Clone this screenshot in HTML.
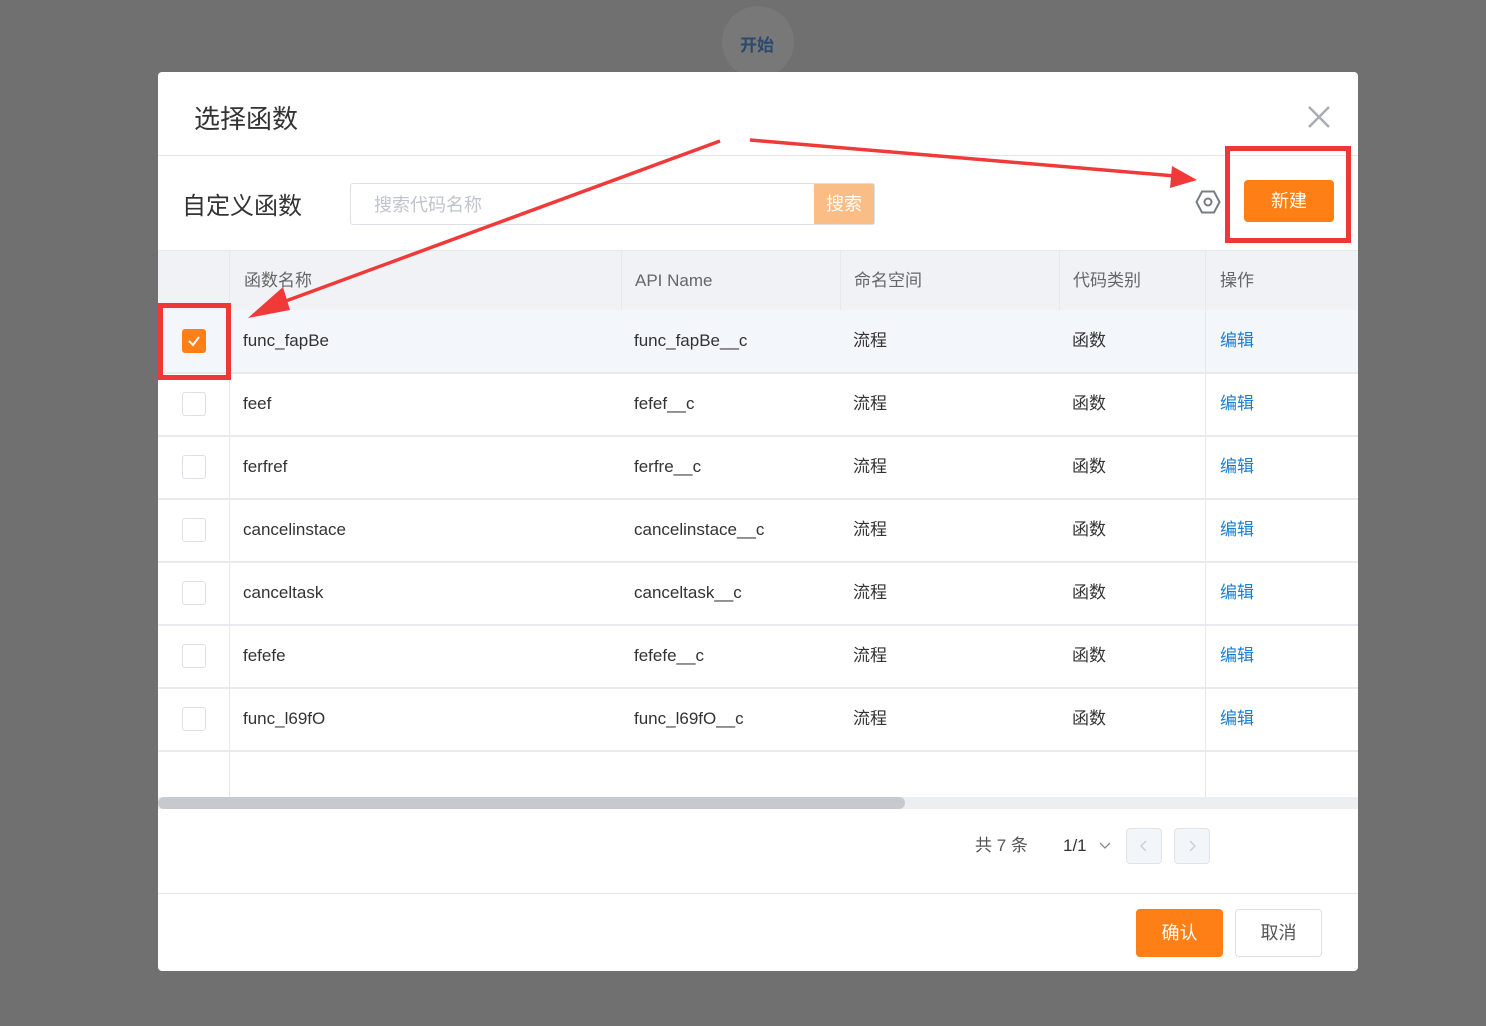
<!DOCTYPE html><html><head><meta charset="utf-8"><style>
*{box-sizing:border-box;margin:0;padding:0}
body{width:1486px;height:1026px;background:#707070;font-family:"Liberation Sans","Noto Sans CJK SC",sans-serif;position:relative;overflow:hidden;color:#333}
.abs{position:absolute}
.modal{left:158px;top:72px;width:1200px;height:899px;background:#fff;border-radius:4px;overflow:hidden}
.t{font-size:17px;color:#333;position:absolute;height:62px;line-height:62px;white-space:nowrap}
.cb{position:absolute;left:24px;width:24px;height:24px;border:1px solid #dcdfe6;border-radius:3px;background:#fff}
.edit{color:#1a7fd4}
</style></head><body>
<div class="abs" style="left:722px;top:6px;width:72px;height:72px;border-radius:50%;background:#787878"></div>
<div class="abs" style="left:740px;top:31px;font-size:17px;font-weight:bold;color:#2a4a6e">开始</div>
<div class="abs modal">
 <div class="abs" style="left:36px;top:27px;font-size:26px;color:#333">选择函数</div>
 <svg class="abs" style="left:1149px;top:33px" width="24" height="24"><path d="M2 2L22 22M22 2L2 22" stroke="#a8adb5" stroke-width="2.5"/></svg>
 <div class="abs" style="left:0;top:83px;width:1200px;height:1px;background:#e4e6ea"></div>
 <div class="abs" style="left:24px;top:114px;font-size:24px;color:#333">自定义函数</div>
 <div class="abs" style="left:192px;top:111px;width:525px;height:42px;border:1px solid #dcdfe6;border-radius:3px"></div>
 <div class="abs" style="left:216px;top:119px;font-size:18px;color:#c0c4cc">搜索代码名称</div>
 <div class="abs" style="left:656px;top:112px;width:60px;height:40px;background:#fbbd86;color:#fff;font-size:18px;text-align:center;line-height:40px">搜索</div>
 <svg class="abs" style="left:1037px;top:117px" width="26" height="26"><path d="M7 2.5H19L24.5 13L19 23.5H7L1.5 13Z" fill="none" stroke="#777d85" stroke-width="2"/><circle cx="13" cy="13" r="3.5" fill="none" stroke="#777d85" stroke-width="2"/></svg>
 <div class="abs" style="left:1086px;top:108px;width:90px;height:42px;background:#fd7f15;border-radius:4px;color:#fff;font-size:18px;text-align:center;line-height:42px">新建</div>
 <div class="abs" style="left:0;top:178px;width:1200px;height:60px;background:#f1f2f5;border-top:1px solid #e6e8ec"></div>
 <div class="abs" style="left:0;top:238px;width:1200px;height:63px;background:#f3f6fb"></div>
 <div class="abs" style="left:71px;top:178px;width:1px;height:548px;background:#e6e8ec"></div>
 <div class="abs" style="left:463px;top:178px;width:1px;height:60px;background:#e6e8ec"></div>
 <div class="abs" style="left:682px;top:178px;width:1px;height:60px;background:#e6e8ec"></div>
 <div class="abs" style="left:901px;top:178px;width:1px;height:60px;background:#e6e8ec"></div>
 <div class="abs" style="left:1047px;top:178px;width:1px;height:548px;background:#e6e8ec"></div>
 <div class="t" style="left:86px;top:178px;color:#666">函数名称</div>
 <div class="t" style="left:477px;top:178px;color:#666">API Name</div>
 <div class="t" style="left:696px;top:178px;color:#666">命名空间</div>
 <div class="t" style="left:915px;top:178px;color:#666">代码类别</div>
 <div class="t" style="left:1062px;top:178px;color:#666">操作</div>
 <div id="rows"></div>
 <div class="abs" style="left:0;top:725px;width:1200px;height:12px;background:#eceef1"></div>
 <div class="abs" style="left:0;top:725px;width:747px;height:12px;background:#c6c9ce;border-radius:6px"></div>
 <div class="abs" style="left:817px;top:763px;font-size:17px;color:#555;line-height:22px">共 7 条</div>
 <div class="abs" style="left:905px;top:763px;font-size:17px;color:#333;line-height:22px">1/1</div>
 <svg class="abs" style="left:940px;top:769px" width="14" height="10"><path d="M2 2L7 7L12 2" fill="none" stroke="#888" stroke-width="1.3"/></svg>
 <div class="abs" style="left:968px;top:756px;width:36px;height:36px;border:1px solid #dfe3ea;border-radius:4px;background:#f2f5f9"></div>
 <div class="abs" style="left:1016px;top:756px;width:36px;height:36px;border:1px solid #dfe3ea;border-radius:4px;background:#f2f5f9"></div>
 <svg class="abs" style="left:978px;top:766px" width="16" height="16"><path d="M10 3L5 8L10 13" fill="none" stroke="#c8ccd3" stroke-width="1.3"/></svg>
 <svg class="abs" style="left:1026px;top:766px" width="16" height="16"><path d="M6 3L11 8L6 13" fill="none" stroke="#c8ccd3" stroke-width="1.3"/></svg>
 <div class="abs" style="left:0;top:821px;width:1200px;height:1px;background:#e4e6ea"></div>
 <div class="abs" style="left:978px;top:837px;width:87px;height:48px;background:#fd7f15;border-radius:4px;color:#fff;font-size:18px;text-align:center;line-height:48px">确认</div>
 <div class="abs" style="left:1077px;top:837px;width:87px;height:48px;border:1px solid #dcdfe6;border-radius:4px;color:#555;font-size:18px;text-align:center;line-height:46px">取消</div>
</div>
<script>
var d=[["func_fapBe","func_fapBe__c"],["feef","fefef__c"],["ferfref","ferfre__c"],["cancelinstace","cancelinstace__c"],["canceltask","canceltask__c"],["fefefe","fefefe__c"],["func_l69fO","func_l69fO__c"]];
var h="";d.forEach(function(r,i){var y=238+i*63;
h+='<div class="abs" style="left:0;top:'+(y+62)+'px;width:1200px;height:2px;background:#e8eaf0"></div>';
h+=i==0?'<div class="cb" style="top:'+(y+19)+'px;background:#fd7f15;border-color:#fd7f15"><svg width="22" height="22"><path d="M6 11L10 15L16 7" fill="none" stroke="#fff" stroke-width="2"/></svg></div>':'<div class="cb" style="top:'+(y+19)+'px"></div>';
h+='<div class="t" style="left:85px;top:'+y+'px">'+r[0]+'</div><div class="t" style="left:476px;top:'+y+'px">'+r[1]+'</div><div class="t" style="left:695px;top:'+y+'px">流程</div><div class="t" style="left:914px;top:'+y+'px">函数</div><div class="t edit" style="left:1062px;top:'+y+'px">编辑</div>';});
document.getElementById("rows").innerHTML=h;
</script>
<svg class="abs" style="left:0;top:0" width="1486" height="1026">
<path d="M720 141L275 305" stroke="#f03a3a" stroke-width="3.5"/>
<path d="M248 318L283 287L290 310Z" fill="#f03a3a"/>
<path d="M750 140L1175 176" stroke="#f03a3a" stroke-width="3.5"/>
<path d="M1197 180L1172 166L1170 188Z" fill="#f03a3a"/>
<rect x="1227.5" y="148.5" width="121" height="92" fill="none" stroke="#ef3737" stroke-width="5"/>
<rect x="160.5" y="305.5" width="68" height="72" fill="none" stroke="#ef3737" stroke-width="5"/>
</svg>
</body></html>
